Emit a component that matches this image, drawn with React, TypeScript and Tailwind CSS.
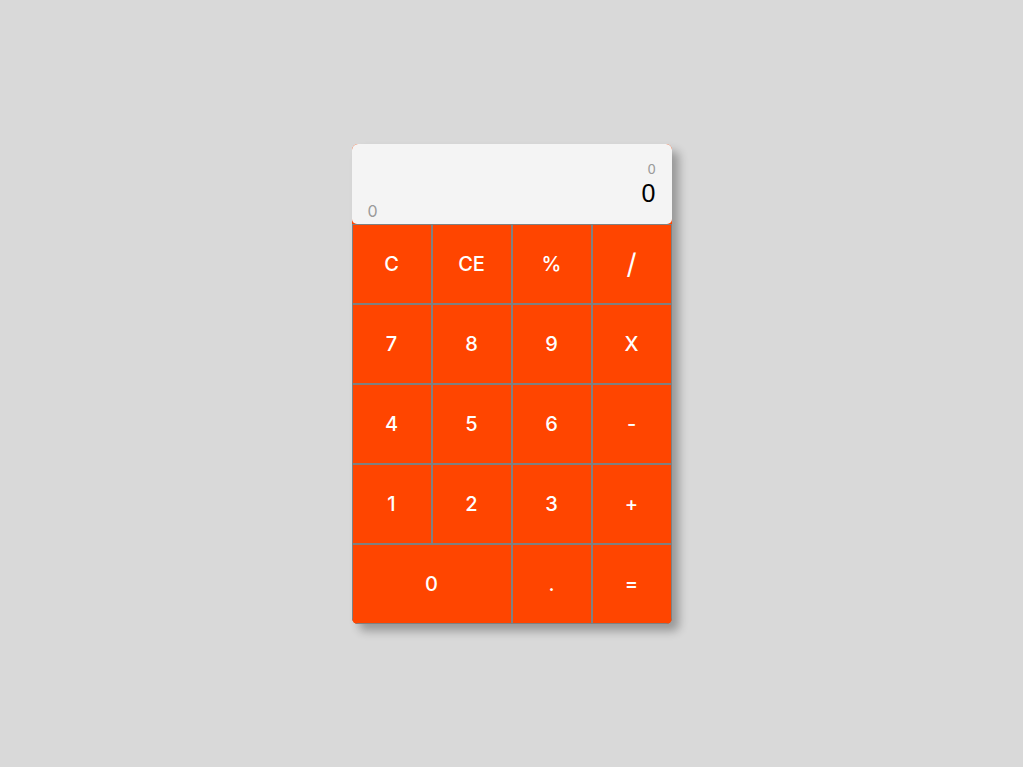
import React from "react";

const keys: { label: string; wide?: boolean; big?: boolean }[] = [
  { label: "C" },
  { label: "CE" },
  { label: "%" },
  { label: "/", big: true },
  { label: "7" },
  { label: "8" },
  { label: "9" },
  { label: "X" },
  { label: "4" },
  { label: "5" },
  { label: "6" },
  { label: "-" },
  { label: "1" },
  { label: "2" },
  { label: "3" },
  { label: "+" },
  { label: "0", wide: true },
  { label: "." },
  { label: "=" },
];

export default function App() {
  return (
    <div className="min-h-screen w-full bg-[#d9d9d9] flex justify-center pt-[144px]">
      <div className="w-[320px] h-[480px] bg-[#ff4500] rounded-[6px] overflow-hidden shadow-[7px_7px_10px_rgba(0,0,0,0.3)] flex flex-col">
        <div className="h-[80px] bg-[#f4f4f4] rounded-[5px] flex flex-col pt-[17px] pb-[5px] px-4 font-['Liberation_Sans',Arial,sans-serif]">
          <div className="text-right text-[14px] leading-[16px] text-[#9a9a9a]">0</div>
          <div className="text-right text-[25px] leading-[24px] mt-1 text-black">0</div>
          <div className="text-left text-[16px] leading-[16px] -mt-[2px] text-[#9a9a9a] font-['Inter',sans-serif]">0</div>
        </div>
        <div className="grid grid-cols-4">
          {keys.map((k) => (
            <button
              key={k.label}
              className={`h-[80px] border border-[#808080] bg-[#ff4500] text-white font-['Inter',sans-serif] flex items-center justify-center ${
                k.wide ? "col-span-2" : ""
              } ${k.big ? "text-[28px] font-normal" : "text-[20px] font-medium"}`}
            >
              {k.label}
            </button>
          ))}
        </div>
      </div>
    </div>
  );
}
